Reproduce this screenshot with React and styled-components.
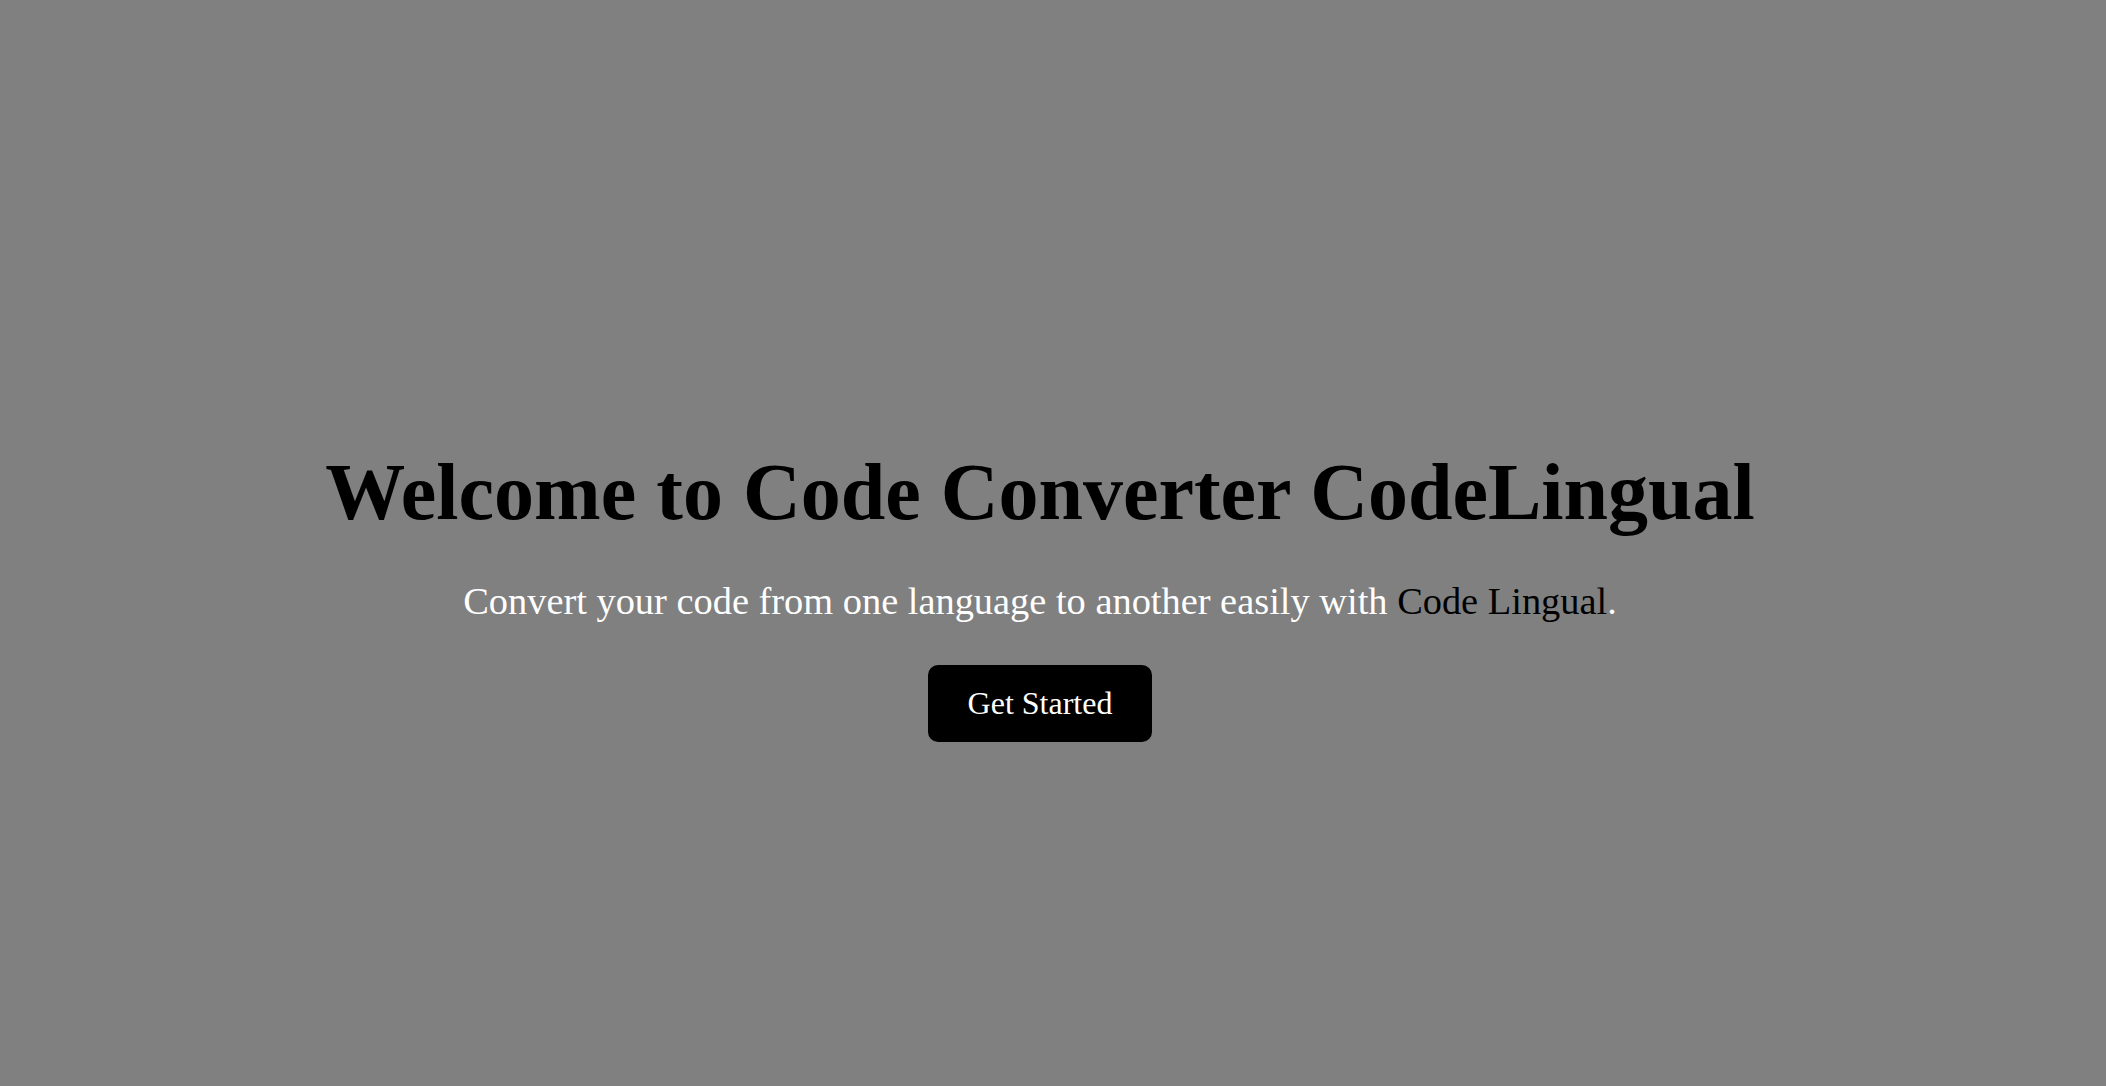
import React from "react";
import styled, { createGlobalStyle } from "styled-components";

const GlobalStyle = createGlobalStyle`
  body {
    margin: 0;
    background-color: #808080;
    font-family: "Liberation Serif", "Times New Roman", serif;
  }
`;

export default function App() {
  return (
    <>
      <GlobalStyle />
      <Hero>
        <Titulo>Welcome to Code Converter CodeLingual</Titulo>
        <Subtitulo>
          Convert your code from one language to another easily with{" "}
          <Destaque>Code Lingual</Destaque>.
        </Subtitulo>
        <Botao>Get Started</Botao>
      </Hero>
    </>
  );
}

const Hero = styled.div`
  min-height: 100vh;
  box-sizing: border-box;
  display: flex;
  flex-direction: column;
  align-items: center;
  justify-content: center;
  text-align: center;
  padding: 102px 26px 0 0;
  background-color: #808080;
`;

const Titulo = styled.h1`
  font-size: 80px;
  font-weight: bold;
  color: #000;
  margin: 0 0 41px;
`;

const Subtitulo = styled.p`
  font-size: 38.4px;
  color: #fff;
  margin: 0 0 42px;
`;

const Destaque = styled.span`
  color: #000;
`;

const Botao = styled.button`
  font-family: "Liberation Serif", "Times New Roman", serif;
  font-size: 32px;
  padding: 20px 40px;
  background-color: #000;
  color: #fff;
  border: none;
  border-radius: 10px;
  cursor: pointer;
`;
